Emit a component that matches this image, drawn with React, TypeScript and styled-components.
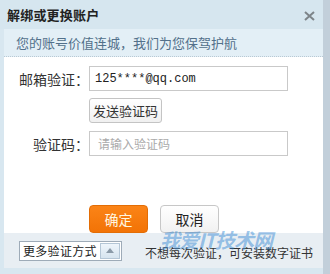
import React from "react";
import styled, { createGlobalStyle } from "styled-components";

const GlobalStyle = createGlobalStyle`
  html, body {
    margin: 0;
    padding: 0;
    background: #d8e7f0;
  }
  * {
    box-sizing: border-box;
  }
`;

const Dialog = styled.div`
  position: relative;
  width: 330px;
  height: 274px;
  display: flex;
  flex-direction: column;
  background: #d8e7f0;
  border-right: 7px solid #c2cfda;
  font-family: "Noto Sans CJK SC", "Noto Sans", sans-serif;
  overflow: hidden;
`;

const TitleBar = styled.div`
  height: 29px;
  display: flex;
  align-items: center;
  justify-content: space-between;
  padding: 0 8px 0 7px;
  background: #d6e6ef;
`;

const Title = styled.div`
  font-size: 13px;
  font-weight: bold;
  color: #222;
  letter-spacing: 0.2px;
`;

const CloseButton = styled.div`
  width: 12px;
  height: 12px;
  margin-top: 2px;
  display: flex;
  align-items: center;
  justify-content: center;
`;

const Panel = styled.div`
  margin-left: 4px;
  flex: 1;
  display: flex;
  flex-direction: column;
  background: #fff;
`;

const Notice = styled.div`
  height: 28px;
  display: flex;
  align-items: center;
  padding-left: 12px;
  background: #e3eff6;
  border-bottom: 1px dotted #b9c9d4;
  font-size: 13px;
  color: #52708a;
`;

const Form = styled.div`
  flex: 1;
  display: flex;
  flex-direction: column;
  padding-top: 9px;
`;

const Row = styled.div<{ $gap?: number }>`
  display: flex;
  align-items: center;
  margin-bottom: ${(p) => p.$gap ?? 7}px;
`;

const Label = styled.div`
  width: 85px;
  text-align: right;
  font-size: 14px;
  color: #333;
`;

const Input = styled.div<{ $placeholder?: boolean }>`
  width: 199px;
  height: 25px;
  display: flex;
  align-items: center;
  padding-left: ${(p) => (p.$placeholder ? 8 : 5)}px;
  border: 1px solid #c9c9c9;
  font-family: ${(p) =>
    p.$placeholder
      ? `"Noto Sans CJK SC", sans-serif`
      : `"Liberation Mono", monospace`};
  font-size: 12px;
  color: ${(p) => (p.$placeholder ? "#aaa" : "#222")};
`;

const SmallButton = styled.div`
  width: 73px;
  height: 25px;
  display: flex;
  align-items: center;
  justify-content: center;
  border: 1px solid #c4c4c4;
  border-radius: 3px;
  background: linear-gradient(#ffffff, #f0f0f0);
  font-size: 13px;
  color: #333;
`;

const Actions = styled.div`
  margin-top: auto;
  display: flex;
  gap: 12px;
  padding-left: 85px;
`;

const ActionButton = styled.div<{ $primary?: boolean }>`
  width: 59px;
  height: 28px;
  display: flex;
  align-items: center;
  justify-content: center;
  border-radius: 4px;
  border: 1px solid ${(p) => (p.$primary ? "#e36d05" : "#c7c7c7")};
  background: ${(p) =>
    p.$primary
      ? "linear-gradient(#fb8417, #f27306)"
      : "linear-gradient(#ffffff, #f1f1f1)"};
  color: ${(p) => (p.$primary ? "#fff6e0" : "#222")};
  font-size: 14px;
`;

const Footer = styled.div`
  height: 35px;
  display: flex;
  align-items: center;
  padding-left: 15px;
  background: #e8eef3;
`;

const Select = styled.div`
  width: 103px;
  height: 20px;
  display: flex;
  align-items: stretch;
  border: 1px solid #9eabb8;
  background: #fff;
`;

const SelectText = styled.div`
  flex: 1;
  display: flex;
  align-items: center;
  padding-left: 3px;
  font-size: 12px;
  letter-spacing: 0.3px;
  white-space: nowrap;
  color: #222;
`;

const SelectArrow = styled.div`
  width: 20px;
  display: flex;
  align-items: center;
  justify-content: center;
  margin: 1px;
  border: 1px solid #b4c6d6;
  background: linear-gradient(#eef5fb, #d6e4ef);
`;

const FooterText = styled.div`
  margin-left: 23px;
  margin-top: 4px;
  font-size: 12px;
  white-space: nowrap;
  color: #333;
`;

const BottomEdge = styled.div`
  height: 6px;
`;

const Watermark = styled.div`
  position: absolute;
  left: 160px;
  top: 229px;
  font-size: 20px;
  line-height: 22px;
  font-weight: bold;
  font-style: italic;
  color: rgba(40, 130, 210, 0.45);
  letter-spacing: -1px;
  pointer-events: none;
`;

const App: React.FC = () => {
  return (
    <>
      <GlobalStyle />
      <Dialog>
        <TitleBar>
          <Title>解绑或更换账户</Title>
          <CloseButton>
            <svg width="11" height="10" viewBox="0 0 11 10">
              <path
                d="M1 1 L10 9 M10 1 L1 9"
                stroke="#7d8489"
                strokeWidth="2"
              />
            </svg>
          </CloseButton>
        </TitleBar>
        <Panel>
          <Notice>您的账号价值连城，我们为您保驾护航</Notice>
          <Form>
            <Row>
              <Label>邮箱验证：</Label>
              <Input>125****@qq.com</Input>
            </Row>
            <Row $gap={8}>
              <Label />
              <SmallButton>发送验证码</SmallButton>
            </Row>
            <Row>
              <Label>验证码：</Label>
              <Input $placeholder>请输入验证码</Input>
            </Row>
            <Actions>
              <ActionButton $primary>确定</ActionButton>
              <ActionButton>取消</ActionButton>
            </Actions>
          </Form>
          <Footer>
            <Select>
              <SelectText>更多验证方式</SelectText>
              <SelectArrow>
                <svg width="8" height="5" viewBox="0 0 8 5">
                  <path d="M0 5 L4 0 L8 5 Z" fill="#8a9aa8" />
                </svg>
              </SelectArrow>
            </Select>
            <FooterText>不想每次验证，可安装数字证书</FooterText>
          </Footer>
        </Panel>
        <BottomEdge />
        <Watermark>我爱IT技术网</Watermark>
      </Dialog>
    </>
  );
};

export default App;
